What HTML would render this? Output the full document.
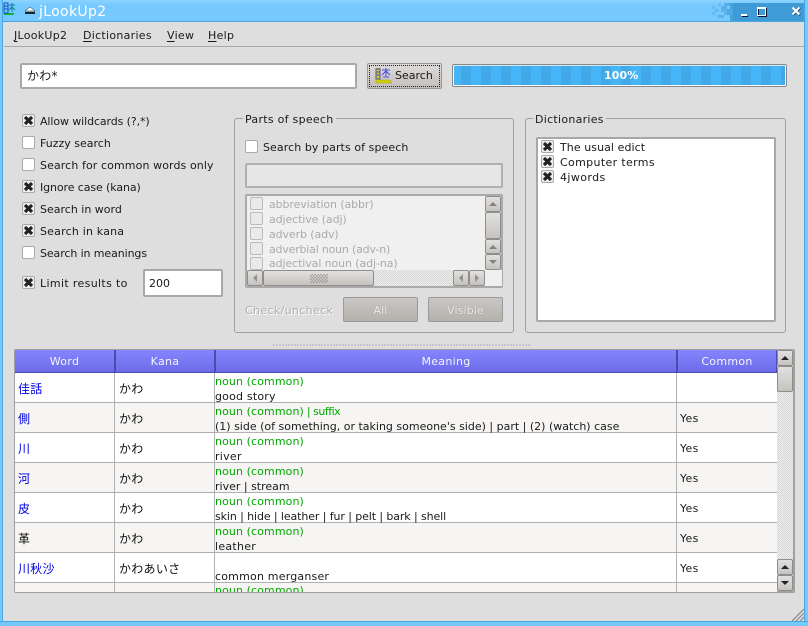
<!DOCTYPE html>
<html><head><meta charset="utf-8"><style>
html,body{margin:0;padding:0}
body{width:808px;height:626px;overflow:hidden;background:#dedede;position:relative;font:11px "DejaVu Sans","WenQuanYi Zen Hei","Noto Sans CJK JP",sans-serif;color:#1a1a1a}
div,span.t{position:absolute;box-sizing:border-box}
.t{white-space:nowrap;line-height:14px;letter-spacing:.28px;margin-top:1px}
.b{border:2px solid #a8a8a8;border-radius:2px;background:#fff}
.c{position:absolute;width:13px;height:13px;background:#fff;border:1px solid #aaa;border-radius:2px;box-sizing:border-box}
.x{background:#eee}
.x svg{position:absolute;left:0;top:0}
.d{color:#aaa}
.sb{background:linear-gradient(#e2e0de,#c6c3bf);border:1px solid #8e8e8e;border-radius:2px}
.tr{background:repeating-conic-gradient(#d4d4d4 0 25%,#f0f0f0 0 50%) 0 0/2px 2px}
.up:after,.dn:after,.lf:after,.rt:after{content:"";position:absolute;left:50%;top:50%;width:0;height:0}
.up:after{margin:-2px 0 0 -4px;border:4px solid transparent;border-top:0;border-bottom:4px solid #222}
.dn:after{margin:-2px 0 0 -4px;border:4px solid transparent;border-bottom:0;border-top:4px solid #222}
.lf:after{margin:-4px 0 0 -2px;border:4px solid transparent;border-left:0;border-right:4px solid #444}
.rt:after{margin:-4px 0 0 -2px;border:4px solid transparent;border-right:0;border-left:4px solid #444}
.dis:after{opacity:.45}
.g{border:1px solid #a0a0a0;border-radius:3px}
.th{top:350px;height:23px;background:linear-gradient(#8585ff,#6c6ce8);border-right:2px solid #4a4ab0;border-bottom:1px solid #4a4ab0;color:#f4f4ff;text-align:center;line-height:24px;letter-spacing:.3px}
.r{left:15px;width:762px;height:30px;border-bottom:1px solid #b0b0b0}
.v{top:373px;width:1px;height:219px;background:#b0b0b0}
.w{left:18px;color:#0000e0;font-size:12px}
.k{left:119px;color:#111;font-size:12px}
.m{left:215px}.gr{left:215px;color:#00a800;letter-spacing:.1px}
.y{left:680px}
.btn{background:linear-gradient(#c9c6c3,#b5b1ad);border:1px solid #9a9a9a;border-radius:2px;text-align:center;color:#ececec;text-shadow:0 0 1px #8f8b87;line-height:25px;letter-spacing:.1px}
u{text-underline-offset:2px}
</style></head><body>
<svg width="0" height="0" style="position:absolute"><defs><path id="xm" d="M3 3L10 10M10 3L3 10" fill="none" stroke="#222" stroke-width="3.200"/></defs></svg>

<!-- window frame -->
<div style="left:0;top:0;width:808px;height:22px;background:linear-gradient(#8cd3ff,#76c9ff 25%,#76c9ff)"></div>
<div style="left:0;top:21px;width:808px;height:1px;background:#4aa6e0"></div>
<div style="left:0;top:0;width:3px;height:626px;background:#76c9ff;border-right:1px solid #4aa6e0"></div>
<div style="left:804px;top:0;width:4px;height:626px;background:#76c9ff;border-left:1px solid #4aa6e0"></div>
<div style="left:0;top:621px;width:808px;height:5px;background:#76c9ff;border-top:1px solid #4aa6e0"></div>
<div style="left:733px;top:3px;width:71px;height:18px;background:#3f9bd6"></div>
<svg style="position:absolute;left:710px;top:3px" width="30" height="18" fill="#3f9bd6">
<rect x="2" y="3" width="3" height="3" opacity=".3"/><rect x="8" y="0" width="3" height="3" opacity=".3"/><rect x="5" y="6" width="3" height="3" opacity=".4"/><rect x="2" y="9" width="3" height="3" opacity=".3"/><rect x="11" y="3" width="6" height="6" opacity=".5"/><rect x="8" y="12" width="6" height="3" opacity=".5"/><rect x="14" y="0" width="6" height="3" opacity=".6"/><rect x="17" y="6" width="6" height="6" opacity=".7"/><rect x="14" y="9" width="3" height="3" opacity=".45"/><rect x="20" y="0" width="8" height="6" opacity=".8"/><rect x="20" y="12" width="8" height="6" opacity=".85"/><rect x="23" y="6" width="5" height="6" opacity=".9"/></svg>
<!-- title bar buttons -->
<svg style="position:absolute;left:740px;top:5px" width="62" height="12"><rect x="1" y="9" width="6" height="2" fill="#fff"/><rect x="2" y="11" width="6" height="1" fill="#113"/><rect x="18.500" y="3.500" width="8" height="8" fill="none" stroke="#113" stroke-width="1"/><rect x="17.500" y="2.500" width="8" height="8" fill="none" stroke="#fff" stroke-width="1"/><rect x="17" y="2" width="9" height="2" fill="#fff"/><path d="M53 3L60 10M60 3L53 10" stroke="#113" stroke-width="2"/><path d="M52.500 2.500L59.500 9.500M59.500 2.500L52.500 9.500" stroke="#fff" stroke-width="2"/></svg>
<!-- app icons -->
<svg style="position:absolute;left:3px;top:2px" width="34" height="14"><rect x="1" y="11" width="10" height="2" fill="#10b030"/><path d="M1 1H5V11H1ZM1 4H5M1 7H5" fill="none" stroke="#1050c0"/><path d="M6 3H12M9 1V10M6 8L9 5L12 8" fill="none" stroke="#108090"/><path d="M22 9L27 5L32 9Z" fill="#fff" stroke="#222" stroke-width=".5"/><rect x="22" y="10" width="10" height="2" fill="#222"/></svg>
<span class="t" style="position:absolute;left:39px;top:2px;color:#fff;font-size:14px;line-height:18px;letter-spacing:.35px">jLookUp2</span>

<!-- menu -->
<div style="left:4px;top:46px;width:800px;height:1px;background:#a8a8a8"></div>
<span class="t" style="position:absolute;left:14px;top:28px"><u>J</u>LookUp2</span>
<span class="t" style="position:absolute;left:83px;top:28px"><u>D</u>ictionaries</span>
<span class="t" style="position:absolute;left:167px;top:28px"><u>V</u>iew</span>
<span class="t" style="position:absolute;left:208px;top:28px"><u>H</u>elp</span>

<!-- search row -->
<div class="b" style="left:20px;top:63px;width:337px;height:26px"></div>
<span class="t" style="position:absolute;left:27px;top:68px;font-size:12px">かわ*</span>
<div style="left:367px;top:63px;width:75px;height:26px;border:1px solid #999;border-radius:2px;background:linear-gradient(#dedcda,#c2bebb)"></div>
<div style="left:369px;top:65px;width:71px;height:22px;border:1px dotted #222"></div>
<svg style="position:absolute;left:375px;top:68px" width="17" height="16"><path d="M1 0H5V12H15L17 15H1Z" fill="#d4d000" stroke="#9a9a20" stroke-width=".5"/><path d="M1 1H5V11H1ZM1 4H5M1 7H5" fill="none" stroke="#5050c0"/><path d="M7 2H15M11 0V8M7 7L11 3L15 7M8 9H14" fill="none" stroke="#4a4ae0"/></svg>
<span class="t" style="position:absolute;left:395px;top:68px;letter-spacing:0">Search</span>
<div style="left:452px;top:64px;width:335px;height:23px;border:1px solid #8a8a8a;border-radius:2px;background:repeating-linear-gradient(90deg,#45b5f7 0 8px,#42a9e8 8px 18px,#45b5f7 18px 20px);box-shadow:inset 0 -1px 0 #fff,inset -1px 0 0 #fff,inset 1px 0 0 #fff,inset 0 1px 0 #cfe8f8"></div>
<span class="t" style="position:absolute;left:604px;top:68px;color:#fff;font-weight:bold;letter-spacing:.1px">100%</span>

<!-- options -->
<div class="c x" style="left:22px;top:114px"><svg width="11" height="11" viewBox="1 1 11 11"><use href="#xm"/></svg></div><span class="t" style="position:absolute;left:40px;top:114px;letter-spacing:-.1px">Allow wildcards (?,*)</span>
<div class="c" style="left:22px;top:136px"></div><span class="t" style="position:absolute;left:40px;top:136px;letter-spacing:0">Fuzzy search</span>
<div class="c" style="left:22px;top:158px"></div><span class="t" style="position:absolute;left:40px;top:158px;letter-spacing:.1px">Search for common words only</span>
<div class="c x" style="left:22px;top:180px"><svg width="11" height="11" viewBox="1 1 11 11"><use href="#xm"/></svg></div><span class="t" style="position:absolute;left:40px;top:180px;letter-spacing:-.1px">Ignore case (kana)</span>
<div class="c x" style="left:22px;top:202px"><svg width="11" height="11" viewBox="1 1 11 11"><use href="#xm"/></svg></div><span class="t" style="position:absolute;left:40px;top:202px;letter-spacing:0">Search in word</span>
<div class="c x" style="left:22px;top:224px"><svg width="11" height="11" viewBox="1 1 11 11"><use href="#xm"/></svg></div><span class="t" style="position:absolute;left:40px;top:224px;letter-spacing:.2px">Search in kana</span>
<div class="c" style="left:22px;top:246px"></div><span class="t" style="position:absolute;left:40px;top:246px;letter-spacing:-.1px">Search in meanings</span>
<div class="c x" style="left:22px;top:276px"><svg width="11" height="11" viewBox="1 1 11 11"><use href="#xm"/></svg></div><span class="t" style="position:absolute;left:40px;top:276px;letter-spacing:.35px">Limit results to</span>
<div class="b" style="left:143px;top:269px;width:80px;height:28px"></div>
<span class="t" style="position:absolute;left:149px;top:276px;letter-spacing:0">200</span>

<!-- parts of speech -->
<div class="g" style="left:234px;top:118px;width:280px;height:215px"></div>
<span class="t" style="position:absolute;left:243px;top:112px;background:#dedede;padding:0 2px">Parts of speech</span>
<div class="c" style="left:245px;top:140px"></div><span class="t" style="position:absolute;left:263px;top:140px;letter-spacing:.08px">Search by parts of speech</span>
<div style="left:245px;top:163px;width:258px;height:25px;border:2px solid #b0b0b0;border-radius:2px;background:#e6e6e6"></div>
<div style="left:245px;top:194px;width:258px;height:94px;border:2px solid #aaa;border-radius:2px;background:#f0f0f0;overflow:hidden"></div>
<div class="c" style="left:250px;top:197px;background:#eaeaea;border-color:#bbb"></div><span class="t d" style="position:absolute;left:269px;top:197px;letter-spacing:-.1px">abbreviation (abbr)</span>
<div class="c" style="left:250px;top:212px;background:#eaeaea;border-color:#bbb"></div><span class="t d" style="position:absolute;left:269px;top:212px;letter-spacing:-.1px">adjective (adj)</span>
<div class="c" style="left:250px;top:227px;background:#eaeaea;border-color:#bbb"></div><span class="t d" style="position:absolute;left:269px;top:227px;letter-spacing:-.1px">adverb (adv)</span>
<div class="c" style="left:250px;top:242px;background:#eaeaea;border-color:#bbb"></div><span class="t d" style="position:absolute;left:269px;top:242px;letter-spacing:-.2px">adverbial noun (adv-n)</span>
<div class="c" style="left:250px;top:257px;background:#eaeaea;border-color:#bbb"></div><span class="t d" style="position:absolute;left:269px;top:256px;letter-spacing:-.1px">adjectival noun (adj-na)</span>
<div style="left:247px;top:270px;width:255px;height:16px;background:#f0f0f0"></div>
<div class="sb up dis" style="left:485px;top:196px;width:16px;height:16px"></div>
<div class="sb" style="left:485px;top:212px;width:16px;height:27px"></div>
<div class="sb up dis" style="left:485px;top:239px;width:16px;height:15px"></div>
<div class="sb dn dis" style="left:485px;top:254px;width:16px;height:16px"></div>
<div class="tr" style="left:373px;top:270px;width:80px;height:16px"></div>
<div class="sb lf dis" style="left:247px;top:270px;width:16px;height:16px"></div>
<div class="sb" style="left:263px;top:270px;width:111px;height:16px"></div>
<div style="left:310px;top:274px;width:18px;height:9px;background:repeating-conic-gradient(#8a8a8a 0 25%,transparent 0 50%) 0 0/3px 3px;opacity:.7"></div>
<div class="sb lf dis" style="left:453px;top:270px;width:16px;height:16px"></div>
<div class="sb rt dis" style="left:469px;top:270px;width:16px;height:16px"></div>
<span class="t" style="position:absolute;left:245px;top:303px;color:#b0b0b0;text-shadow:1px 1px 0 #fff;letter-spacing:.35px">Check/uncheck</span>
<div class="btn" style="left:343px;top:297px;width:75px;height:25px">All</div>
<div class="btn" style="left:428px;top:297px;width:75px;height:25px">Visible</div>

<!-- dictionaries -->
<div class="g" style="left:525px;top:118px;width:261px;height:215px"></div>
<span class="t" style="position:absolute;left:533px;top:112px;background:#dedede;padding:0 2px">Dictionaries</span>
<div class="b" style="left:536px;top:137px;width:240px;height:185px"></div>
<div class="c x" style="left:541px;top:140px"><svg width="11" height="11" viewBox="1 1 11 11"><use href="#xm"/></svg></div><span class="t" style="position:absolute;left:560px;top:140px;letter-spacing:.07px">The usual edict</span>
<div class="c x" style="left:541px;top:155px"><svg width="11" height="11" viewBox="1 1 11 11"><use href="#xm"/></svg></div><span class="t" style="position:absolute;left:560px;top:155px;letter-spacing:.35px">Computer terms</span>
<div class="c x" style="left:541px;top:170px"><svg width="11" height="11" viewBox="1 1 11 11"><use href="#xm"/></svg></div><span class="t" style="position:absolute;left:560px;top:170px;letter-spacing:.4px">4jwords</span>

<!-- splitter -->
<div style="left:273px;top:344px;width:258px;height:2px;background:repeating-linear-gradient(90deg,#c6c6c6 0 2px,transparent 2px 3px)"></div>

<!-- table -->
<div style="left:14px;top:349px;width:781px;height:244px;border:1px solid #a0a0a0;border-width:1px 2px 2px 1px;border-radius:2px;background:#fff"></div>
<div class="r" style="top:373px;background:#fff"></div>
<div class="r" style="top:403px;background:#f6f5f3"></div>
<div class="r" style="top:433px;background:#fff"></div>
<div class="r" style="top:463px;background:#f6f5f3"></div>
<div class="r" style="top:493px;background:#fff"></div>
<div class="r" style="top:523px;background:#f6f5f3"></div>
<div class="r" style="top:553px;background:#fff"></div>
<div class="r" style="top:583px;height:9px;background:#f6f5f3;border:0"></div>
<div class="v" style="left:114px"></div><div class="v" style="left:214px"></div><div class="v" style="left:676px"></div>
<div class="th" style="left:15px;width:101px">Word</div>
<div class="th" style="left:116px;width:100px">Kana</div>
<div class="th" style="left:216px;width:462px">Meaning</div>
<div class="th" style="left:678px;width:99px;border-right:1px solid #4a4ab0">Common</div>

<span class="t w" style="position:absolute;top:381px">佳話</span><span class="t k" style="position:absolute;top:381px">かわ</span><span class="t gr" style="position:absolute;top:374px">noun (common)</span><span class="t m" style="position:absolute;top:389px;letter-spacing:.2px">good story</span>
<span class="t w" style="position:absolute;top:411px">側</span><span class="t k" style="position:absolute;top:411px">かわ</span><span class="t gr" style="position:absolute;top:404px">noun (common)<span style="letter-spacing:-.5px"> | suffix</span></span><span class="t m" style="position:absolute;top:419px;letter-spacing:0">(1) side (of something, or taking someone's side) | part | (2) (watch) case</span><span class="t y" style="position:absolute;top:411px">Yes</span>
<span class="t w" style="position:absolute;top:441px">川</span><span class="t k" style="position:absolute;top:441px">かわ</span><span class="t gr" style="position:absolute;top:434px">noun (common)</span><span class="t m" style="position:absolute;top:449px">river</span><span class="t y" style="position:absolute;top:441px">Yes</span>
<span class="t w" style="position:absolute;top:471px">河</span><span class="t k" style="position:absolute;top:471px">かわ</span><span class="t gr" style="position:absolute;top:464px">noun (common)</span><span class="t m" style="position:absolute;top:479px;letter-spacing:0">river | stream</span><span class="t y" style="position:absolute;top:471px">Yes</span>
<span class="t w" style="position:absolute;top:501px">皮</span><span class="t k" style="position:absolute;top:501px">かわ</span><span class="t gr" style="position:absolute;top:494px">noun (common)</span><span class="t m" style="position:absolute;top:509px;letter-spacing:-.1px">skin | hide | leather | fur | pelt | bark | shell</span><span class="t y" style="position:absolute;top:501px">Yes</span>
<span class="t k" style="position:absolute;left:18px;top:531px">革</span><span class="t k" style="position:absolute;top:531px">かわ</span><span class="t gr" style="position:absolute;top:524px">noun (common)</span><span class="t m" style="position:absolute;top:539px">leather</span><span class="t y" style="position:absolute;top:531px">Yes</span>
<span class="t w" style="position:absolute;top:561px">川秋沙</span><span class="t k" style="position:absolute;top:561px">かわあいさ</span><span class="t m" style="position:absolute;top:569px;letter-spacing:.2px">common merganser</span><span class="t y" style="position:absolute;top:561px">Yes</span>
<div style="left:215px;top:583px;width:200px;height:9px;overflow:hidden"><span class="t" style="position:absolute;left:0;top:0;color:#00a800;letter-spacing:.1px">noun (common)</span></div>

<!-- table scrollbar -->
<div class="tr" style="left:777px;top:350px;width:16px;height:241px"></div>
<div class="sb up" style="left:777px;top:350px;width:16px;height:16px"></div>
<div class="sb" style="left:777px;top:366px;width:16px;height:26px"></div>
<div class="sb up" style="left:777px;top:559px;width:16px;height:16px"></div>
<div class="sb dn" style="left:777px;top:575px;width:16px;height:16px"></div>

<!-- grip -->
<svg style="position:absolute;left:792px;top:609px" width="12" height="12"><path d="M0 12L12 0M4 12L12 4M8 12L12 8" stroke="#8a8a8a" stroke-width="1.200"/></svg>
</body></html>
